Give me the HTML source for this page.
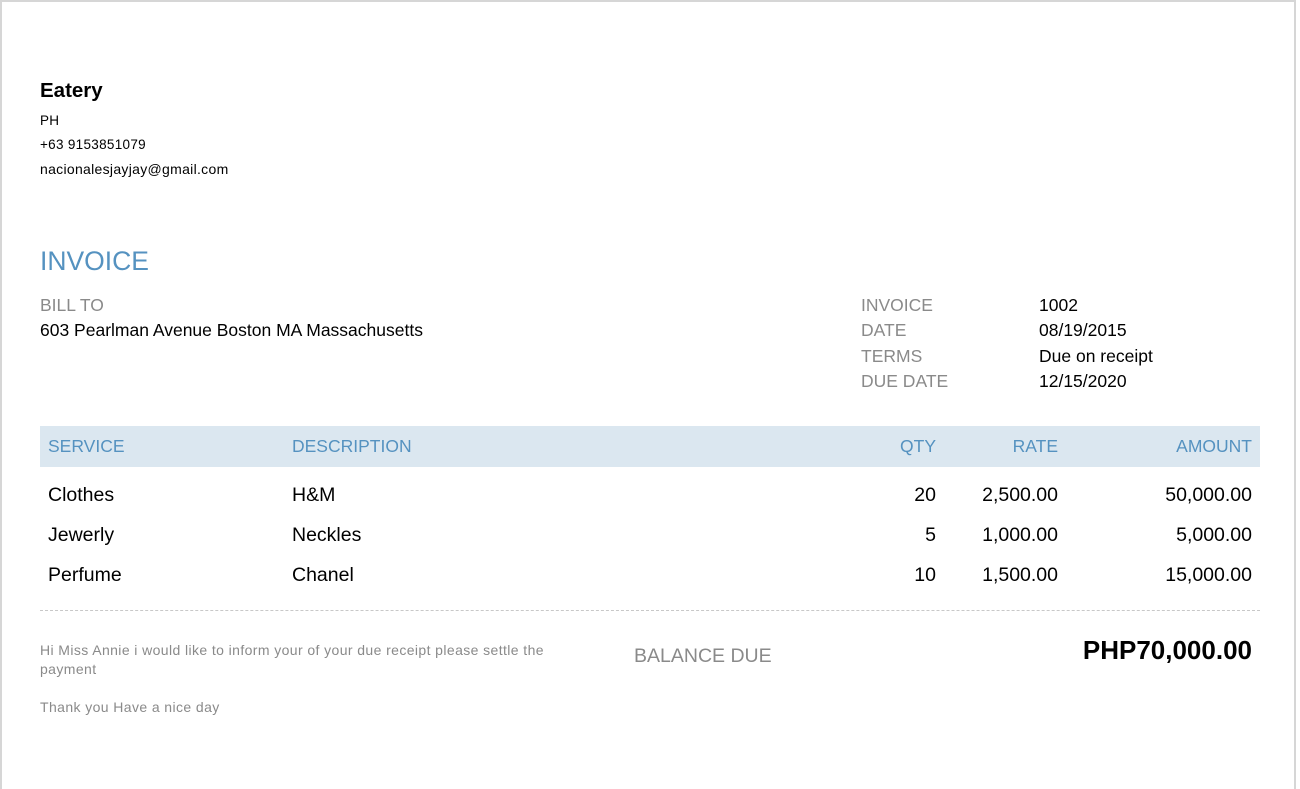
<html><head><style>
body{margin:0;width:1300px;height:789px;background:#fff;font-family:"Liberation Sans",Arial,sans-serif;position:relative;overflow:hidden}
.a{position:absolute;white-space:nowrap;line-height:1}
.g{color:#8a8a8a}
.r{text-align:right}
</style></head><body>
<div style="position:absolute;left:0;top:0;width:1296px;height:789px;border-top:2px solid #d6d6d6;border-left:2px solid #d6d6d6;border-right:2px solid #d6d6d6;box-sizing:border-box"></div>
<div class="a" style="left:40px;top:81px;font-size:20.5px;font-weight:bold">Eatery</div>
<div class="a" style="left:40px;top:114px;font-size:13.5px;letter-spacing:0.3px">PH</div>
<div class="a" style="left:40px;top:138px;font-size:13.5px;letter-spacing:0.3px">+63 9153851079</div>
<div class="a" style="left:40px;top:162px;font-size:14px;letter-spacing:0.3px">nacionalesjayjay@gmail.com</div>
<div class="a" style="left:40px;top:248px;font-size:26.5px;color:#5592c0">INVOICE</div>
<div class="a g" style="left:40px;top:297px;font-size:17.5px">BILL TO</div>
<div class="a" style="left:40px;top:322px;font-size:17.5px">603 Pearlman Avenue Boston MA Massachusetts</div>
<div class="a g" style="left:861px;top:293px;font-size:17.5px;line-height:25.3px">INVOICE<br>DATE<br>TERMS<br>DUE DATE</div>
<div class="a" style="left:1039px;top:293px;font-size:17.5px;line-height:25.3px">1002<br>08/19/2015<br>Due on receipt<br>12/15/2020</div>
<div style="position:absolute;left:40px;top:426px;width:1220px;height:41px;background:#dbe7f0"></div>
<div class="a" style="left:48px;top:438px;font-size:17.5px;color:#5592c0">SERVICE</div>
<div class="a" style="left:292px;top:438px;font-size:17.5px;color:#5592c0">DESCRIPTION</div>
<div class="a r" style="right:364px;top:438px;font-size:17.5px;color:#5592c0">QTY</div>
<div class="a r" style="right:242px;top:438px;font-size:17.5px;color:#5592c0">RATE</div>
<div class="a r" style="right:48px;top:438px;font-size:17.5px;color:#5592c0">AMOUNT</div>
<div class="a" style="left:48px;top:486px;font-size:19.5px;line-height:40px;margin-top:-11px">Clothes<br>Jewerly<br>Perfume</div>
<div class="a" style="left:292px;top:486px;font-size:19.5px;line-height:40px;margin-top:-11px">H&amp;M<br>Neckles<br>Chanel</div>
<div class="a r" style="right:364px;top:486px;font-size:19.5px;line-height:40px;margin-top:-11px">20<br>5<br>10</div>
<div class="a r" style="right:242px;top:486px;font-size:19.5px;line-height:40px;margin-top:-11px">2,500.00<br>1,000.00<br>1,500.00</div>
<div class="a r" style="right:48px;top:486px;font-size:19.5px;line-height:40px;margin-top:-11px">50,000.00<br>5,000.00<br>15,000.00</div>
<div style="position:absolute;left:40px;top:610px;width:1220px;border-top:1px dashed #c8c8c8"></div>
<div class="a g" style="left:40px;top:641px;font-size:14px;line-height:19px;letter-spacing:0.4px">Hi Miss Annie i would like to inform your of your due receipt please settle the<br>payment</div>
<div class="a g" style="left:40px;top:700px;font-size:14px;letter-spacing:0.4px">Thank you Have a nice day</div>
<div class="a g" style="left:634px;top:647px;font-size:19.5px">BALANCE DUE</div>
<div class="a r" style="right:48px;top:637px;font-size:26px;font-weight:bold">PHP70,000.00</div>
</body></html>
